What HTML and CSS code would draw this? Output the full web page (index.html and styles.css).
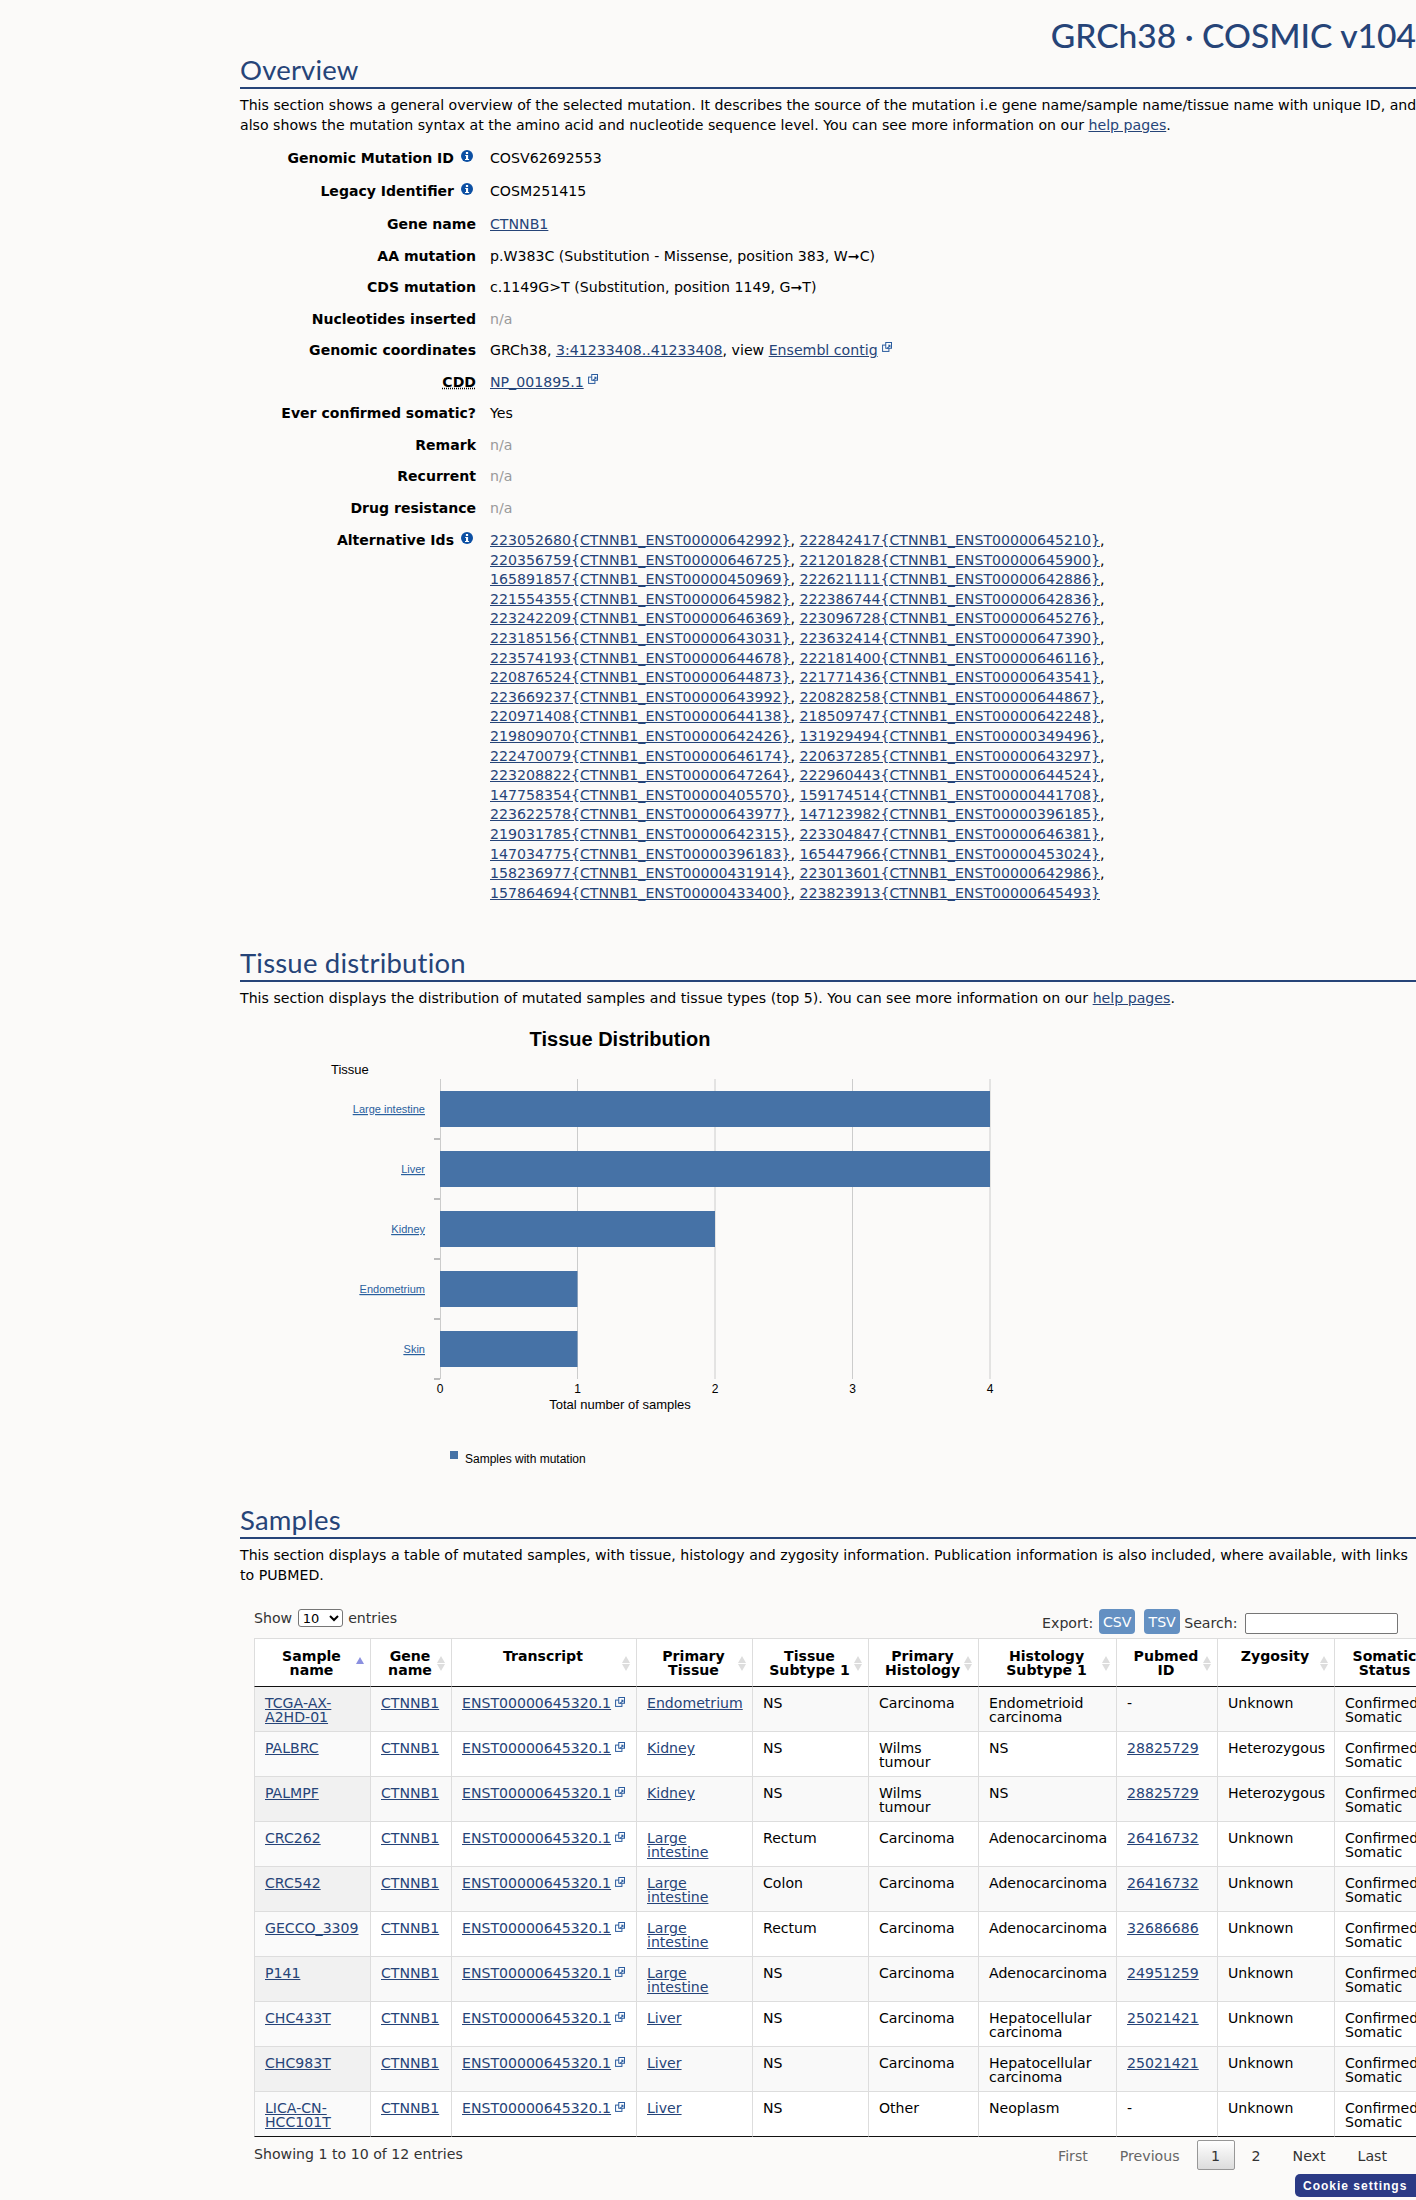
FILE: index.html
```html
<!DOCTYPE html>
<html lang="en">
<head>
<meta charset="utf-8">
<title>COSMIC mutation overview</title>
<link rel="stylesheet" href="styles.css">
</head>
<body>
<svg class="defs" width="0" height="0" aria-hidden="true">
  <symbol id="info" viewBox="0 0 12 12"><circle cx="6" cy="6" r="6" fill="#0c4fa3"/><rect x="4.9" y="2" width="2.2" height="2" fill="#fff"/><path d="M4.2 5h2.9v3.9h1v1.2H4v-1.2h1V6.1h-.8z" fill="#fff"/></symbol>
  <symbol id="ext" viewBox="0 0 12 12"><rect x=".7" y="3.7" width="7.6" height="7.6" fill="none" stroke="#2b5c9e" stroke-width="1.2"/><rect x="4.5" y=".6" width="6.9" height="6.9" fill="#fff" stroke="#2b5c9e" stroke-width="1.2"/><path d="M5.4 7.6 8.2 4.7 7 3.4h3.2v3.3L9 5.6 6.4 8.4z" fill="#2b5c9e"/></symbol>
</svg>
<main class="page">
  <h1 class="title">GRCh38 · COSMIC v104</h1>

  <section class="overview">
    <h2 class="heading">Overview</h2>
    <p class="intro">This section shows a general overview of the selected mutation. It describes the source of the mutation i.e gene name/sample name/tissue name with unique ID, and also shows the mutation syntax at the amino acid and nucleotide sequence level. You can see more information on our <a href="#">help pages</a>.</p>
    <dl class="facts">
      <div class="fact has-info"><dt>Genomic Mutation ID<svg class="info"><use href="#info"/></svg></dt><dd>COSV62692553</dd></div>
      <div class="fact has-info"><dt>Legacy Identifier<svg class="info"><use href="#info"/></svg></dt><dd>COSM251415</dd></div>
      <div class="fact"><dt>Gene name</dt><dd><a href="#">CTNNB1</a></dd></div>
      <div class="fact"><dt>AA mutation</dt><dd>p.W383C (Substitution - Missense, position 383, W➞C)</dd></div>
      <div class="fact"><dt>CDS mutation</dt><dd>c.1149G&gt;T (Substitution, position 1149, G➞T)</dd></div>
      <div class="fact"><dt>Nucleotides inserted</dt><dd class="na">n/a</dd></div>
      <div class="fact"><dt>Genomic coordinates</dt><dd>GRCh38, <a href="#">3:41233408..41233408</a>, view <a href="#">Ensembl contig</a><svg class="ext"><use href="#ext"/></svg></dd></div>
      <div class="fact"><dt><abbr class="abbr">CDD</abbr></dt><dd><a href="#">NP_001895.1</a><svg class="ext"><use href="#ext"/></svg></dd></div>
      <div class="fact"><dt>Ever confirmed somatic?</dt><dd>Yes</dd></div>
      <div class="fact"><dt>Remark</dt><dd class="na">n/a</dd></div>
      <div class="fact"><dt>Recurrent</dt><dd class="na">n/a</dd></div>
      <div class="fact"><dt>Drug resistance</dt><dd class="na">n/a</dd></div>
      <div class="fact fact-alt"><dt>Alternative Ids<svg class="info"><use href="#info"/></svg></dt><dd class="alts">
        <a href="#">223052680{CTNNB1_ENST00000642992}</a>, <a href="#">222842417{CTNNB1_ENST00000645210}</a>,
        <a href="#">220356759{CTNNB1_ENST00000646725}</a>, <a href="#">221201828{CTNNB1_ENST00000645900}</a>,
        <a href="#">165891857{CTNNB1_ENST00000450969}</a>, <a href="#">222621111{CTNNB1_ENST00000642886}</a>,
        <a href="#">221554355{CTNNB1_ENST00000645982}</a>, <a href="#">222386744{CTNNB1_ENST00000642836}</a>,
        <a href="#">223242209{CTNNB1_ENST00000646369}</a>, <a href="#">223096728{CTNNB1_ENST00000645276}</a>,
        <a href="#">223185156{CTNNB1_ENST00000643031}</a>, <a href="#">223632414{CTNNB1_ENST00000647390}</a>,
        <a href="#">223574193{CTNNB1_ENST00000644678}</a>, <a href="#">222181400{CTNNB1_ENST00000646116}</a>,
        <a href="#">220876524{CTNNB1_ENST00000644873}</a>, <a href="#">221771436{CTNNB1_ENST00000643541}</a>,
        <a href="#">223669237{CTNNB1_ENST00000643992}</a>, <a href="#">220828258{CTNNB1_ENST00000644867}</a>,
        <a href="#">220971408{CTNNB1_ENST00000644138}</a>, <a href="#">218509747{CTNNB1_ENST00000642248}</a>,
        <a href="#">219809070{CTNNB1_ENST00000642426}</a>, <a href="#">131929494{CTNNB1_ENST00000349496}</a>,
        <a href="#">222470079{CTNNB1_ENST00000646174}</a>, <a href="#">220637285{CTNNB1_ENST00000643297}</a>,
        <a href="#">223208822{CTNNB1_ENST00000647264}</a>, <a href="#">222960443{CTNNB1_ENST00000644524}</a>,
        <a href="#">147758354{CTNNB1_ENST00000405570}</a>, <a href="#">159174514{CTNNB1_ENST00000441708}</a>,
        <a href="#">223622578{CTNNB1_ENST00000643977}</a>, <a href="#">147123982{CTNNB1_ENST00000396185}</a>,
        <a href="#">219031785{CTNNB1_ENST00000642315}</a>, <a href="#">223304847{CTNNB1_ENST00000646381}</a>,
        <a href="#">147034775{CTNNB1_ENST00000396183}</a>, <a href="#">165447966{CTNNB1_ENST00000453024}</a>,
        <a href="#">158236977{CTNNB1_ENST00000431914}</a>, <a href="#">223013601{CTNNB1_ENST00000642986}</a>,
        <a href="#">157864694{CTNNB1_ENST00000433400}</a>, <a href="#">223823913{CTNNB1_ENST00000645493}</a>
      </dd></div>
    </dl>
  </section>

  <section class="tissue">
    <h2 class="heading">Tissue distribution</h2>
    <p class="intro">This section displays the distribution of mutated samples and tissue types (top 5). You can see more information on our <a href="#">help pages</a>.</p>
    <svg class="chart" width="800" height="480" viewBox="0 0 800 480">
      <g class="grid">
        <line x1="140.5" y1="70" x2="140.5" y2="370"/>
        <line x1="277.5" y1="70" x2="277.5" y2="370"/>
        <line x1="415" y1="70" x2="415" y2="370"/>
        <line x1="552.5" y1="70" x2="552.5" y2="370"/>
        <line x1="690" y1="70" x2="690" y2="370"/>
      </g>
      <g class="ticks">
        <line x1="134" y1="130" x2="140" y2="130"/>
        <line x1="134" y1="190" x2="140" y2="190"/>
        <line x1="134" y1="250" x2="140" y2="250"/>
        <line x1="134" y1="310" x2="140" y2="310"/>
        <line x1="134" y1="370" x2="140" y2="370"/>
      </g>
      <g class="bars">
        <rect x="140" y="82" width="550" height="36"/>
        <rect x="140" y="142" width="550" height="36"/>
        <rect x="140" y="202" width="275" height="36"/>
        <rect x="140" y="262" width="137.5" height="36"/>
        <rect x="140" y="322" width="137.5" height="36"/>
      </g>
      <text class="c-title" x="320" y="37" text-anchor="middle">Tissue Distribution</text>
      <text class="c-axis" x="31" y="65">Tissue</text>
      <g class="c-links">
        <a href="#"><text x="125" y="104" text-anchor="end">Large intestine</text></a>
        <a href="#"><text x="125" y="164" text-anchor="end">Liver</text></a>
        <a href="#"><text x="125" y="224" text-anchor="end">Kidney</text></a>
        <a href="#"><text x="125" y="284" text-anchor="end">Endometrium</text></a>
        <a href="#"><text x="125" y="344" text-anchor="end">Skin</text></a>
      </g>
      <g class="c-nums">
        <text x="140" y="384" text-anchor="middle">0</text>
        <text x="277.5" y="384" text-anchor="middle">1</text>
        <text x="415" y="384" text-anchor="middle">2</text>
        <text x="552.5" y="384" text-anchor="middle">3</text>
        <text x="690" y="384" text-anchor="middle">4</text>
      </g>
      <text class="c-axis" x="320" y="400" text-anchor="middle">Total number of samples</text>
      <rect class="c-key" x="150" y="442" width="8" height="8"/>
      <text class="c-legend" x="165" y="454">Samples with mutation</text>
    </svg>
  </section>

  <section class="samples">
    <h2 class="heading">Samples</h2>
    <p class="intro">This section displays a table of mutated samples, with tissue, histology and zygosity information. Publication information is also included, where available, with links to PUBMED.</p>
    <div class="dt">
      <div class="dt-top">
        <label class="dt-length">Show <select class="dt-select"><option>10</option></select> entries</label>
        <div class="dt-tools">
          <span>Export:</span>
          <button class="dt-btn">CSV</button>
          <button class="dt-btn">TSV</button>
          <label class="dt-search">Search: <input class="dt-input" type="text"></label>
        </div>
      </div>
      <table class="table">
        <colgroup>
          <col class="c1"><col class="c2"><col class="c3"><col class="c4"><col class="c5"><col class="c6"><col class="c7"><col class="c8"><col class="c9"><col class="c10">
        </colgroup>
        <thead>
          <tr>
            <th class="sorted">Sample name</th><th>Gene name</th><th>Transcript</th><th>Primary Tissue</th><th>Tissue Subtype 1</th><th>Primary Histology</th><th>Histology Subtype 1</th><th>Pubmed ID</th><th>Zygosity</th><th>Somatic Status</th>
          </tr>
        </thead>
        <tbody>
          <tr><td><a href="#">TCGA-AX-A2HD-01</a></td><td><a href="#">CTNNB1</a></td><td><a href="#">ENST00000645320.1</a><svg class="ext"><use href="#ext"/></svg></td><td><a href="#">Endometrium</a></td><td>NS</td><td>Carcinoma</td><td>Endometrioid carcinoma</td><td>-</td><td>Unknown</td><td>Confirmed Somatic</td></tr>
          <tr><td><a href="#">PALBRC</a></td><td><a href="#">CTNNB1</a></td><td><a href="#">ENST00000645320.1</a><svg class="ext"><use href="#ext"/></svg></td><td><a href="#">Kidney</a></td><td>NS</td><td>Wilms tumour</td><td>NS</td><td><a href="#">28825729</a></td><td>Heterozygous</td><td>Confirmed Somatic</td></tr>
          <tr><td><a href="#">PALMPF</a></td><td><a href="#">CTNNB1</a></td><td><a href="#">ENST00000645320.1</a><svg class="ext"><use href="#ext"/></svg></td><td><a href="#">Kidney</a></td><td>NS</td><td>Wilms tumour</td><td>NS</td><td><a href="#">28825729</a></td><td>Heterozygous</td><td>Confirmed Somatic</td></tr>
          <tr><td><a href="#">CRC262</a></td><td><a href="#">CTNNB1</a></td><td><a href="#">ENST00000645320.1</a><svg class="ext"><use href="#ext"/></svg></td><td><a href="#">Large intestine</a></td><td>Rectum</td><td>Carcinoma</td><td>Adenocarcinoma</td><td><a href="#">26416732</a></td><td>Unknown</td><td>Confirmed Somatic</td></tr>
          <tr><td><a href="#">CRC542</a></td><td><a href="#">CTNNB1</a></td><td><a href="#">ENST00000645320.1</a><svg class="ext"><use href="#ext"/></svg></td><td><a href="#">Large intestine</a></td><td>Colon</td><td>Carcinoma</td><td>Adenocarcinoma</td><td><a href="#">26416732</a></td><td>Unknown</td><td>Confirmed Somatic</td></tr>
          <tr><td><a href="#">GECCO_3309</a></td><td><a href="#">CTNNB1</a></td><td><a href="#">ENST00000645320.1</a><svg class="ext"><use href="#ext"/></svg></td><td><a href="#">Large intestine</a></td><td>Rectum</td><td>Carcinoma</td><td>Adenocarcinoma</td><td><a href="#">32686686</a></td><td>Unknown</td><td>Confirmed Somatic</td></tr>
          <tr><td><a href="#">P141</a></td><td><a href="#">CTNNB1</a></td><td><a href="#">ENST00000645320.1</a><svg class="ext"><use href="#ext"/></svg></td><td><a href="#">Large intestine</a></td><td>NS</td><td>Carcinoma</td><td>Adenocarcinoma</td><td><a href="#">24951259</a></td><td>Unknown</td><td>Confirmed Somatic</td></tr>
          <tr><td><a href="#">CHC433T</a></td><td><a href="#">CTNNB1</a></td><td><a href="#">ENST00000645320.1</a><svg class="ext"><use href="#ext"/></svg></td><td><a href="#">Liver</a></td><td>NS</td><td>Carcinoma</td><td>Hepatocellular carcinoma</td><td><a href="#">25021421</a></td><td>Unknown</td><td>Confirmed Somatic</td></tr>
          <tr><td><a href="#">CHC983T</a></td><td><a href="#">CTNNB1</a></td><td><a href="#">ENST00000645320.1</a><svg class="ext"><use href="#ext"/></svg></td><td><a href="#">Liver</a></td><td>NS</td><td>Carcinoma</td><td>Hepatocellular carcinoma</td><td><a href="#">25021421</a></td><td>Unknown</td><td>Confirmed Somatic</td></tr>
          <tr><td><a href="#">LICA-CN-HCC101T</a></td><td><a href="#">CTNNB1</a></td><td><a href="#">ENST00000645320.1</a><svg class="ext"><use href="#ext"/></svg></td><td><a href="#">Liver</a></td><td>NS</td><td>Other</td><td>Neoplasm</td><td>-</td><td>Unknown</td><td>Confirmed Somatic</td></tr>
        </tbody>
      </table>
      <div class="dt-bottom">
        <div class="dt-info">Showing 1 to 10 of 12 entries</div>
        <nav class="pager">
          <span class="pg off">First</span>
          <span class="pg off">Previous</span>
          <span class="pg current">1</span>
          <span class="pg">2</span>
          <span class="pg">Next</span>
          <span class="pg">Last</span>
        </nav>
      </div>
    </div>
  </section>
</main>
<button class="cookie">Cookie settings</button>
</body>
</html>
```
FILE: styles.css
```css
* { box-sizing: border-box; }
html, body { margin: 0; padding: 0; overflow-x: hidden; }
body {
  background: #fbfaf9;
  color: #000;
  font-family: "DejaVu Sans", Verdana, sans-serif;
  font-size: 14.15px;
  line-height: 19.5px;
}
.defs { position: absolute; }
a { color: #264478; text-decoration: underline; }
.page { padding: 10px 0 0 240px; width: 1416px; }

.title {
  margin: 0;
  height: 47px;
  text-align: right;
  font-family: Lato, sans-serif;
  font-weight: 500;
  font-size: 33.6px;
  line-height: 50px;
  color: #264478;
}
.heading {
  margin: 0;
  height: 32px;
  border-bottom: 2px solid #264478;
  font-family: Lato, sans-serif;
  font-weight: 400;
  font-size: 27.5px;
  line-height: 25px;
  letter-spacing: .2px;
  color: #264478;
}
.intro { margin: 6px 0 0; width: 1180px; line-height: 20px; }

.facts { margin: 8px 0 0; }
.fact { display: flex; gap: 14px; padding: 6px 0; }
.fact.has-info { padding-bottom: 7.5px; }
.fact-alt { padding-top: 7px; }
.fact dt { width: 236px; flex: none; text-align: right; font-weight: 700; font-size: 14.05px; }
.fact dd { margin: 0; }
.na { color: #999; }
.abbr { text-decoration: underline dotted; }
.alts { width: 640px; line-height: 19.6px; }
.info { width: 12px; height: 12px; margin: 1px 3px 0 7px; vertical-align: top; }
.ext { width: 10px; height: 10px; margin: 1px 0 0 4px; vertical-align: top; }

.tissue { margin-top: 41px; }
.chart { display: block; margin: 1px 0 0 60px; }

.samples { margin-top: 18px; }
.dt { margin: 24px 0 0 14px; color: #333; }
.dt-top { display: flex; justify-content: space-between; align-items: flex-end; width: 1144px; height: 29px; }
.dt-length { align-self: flex-start; line-height: 18px; }
.dt-select { width: 45px; height: 18px; font: 13px "DejaVu Sans", sans-serif; margin: 0 1px; padding: 0; background: #fff; border: 1px solid #767676; border-radius: 3px; vertical-align: top; }
.dt-tools { display: flex; align-items: flex-end; padding-bottom: 4px; line-height: 21px; }
.dt-btn {
  width: 36px; height: 25px; padding: 0; margin-left: 9px; border: 0; border-radius: 4px;
  background: #6490c2; color: #fff; font: 14.15px "DejaVu Sans", sans-serif;
}
.dt-btn:first-of-type { margin-left: 6px; }
.dt-search { margin-left: 4px; }
.dt-input { width: 153px; height: 21px; margin-left: 3px; border: 1px solid #767676; border-radius: 2px; background: #fff; padding: 0; vertical-align: bottom; }

.table { table-layout: fixed; border-collapse: separate; border-spacing: 0; width: 1182px; color: #000; background: #fff; line-height: 14px; font-size: 14.1px; }
.c1 { width: 116px; } .c2 { width: 81px; } .c3 { width: 185px; } .c4 { width: 116px; } .c5 { width: 116px; }
.c6 { width: 110px; } .c7 { width: 138px; } .c8 { width: 101px; } .c9 { width: 117px; } .c10 { width: 102px; }
.table th {
  position: relative;
  padding: 10px 12px 9px 10px;
  background: #fff;
  border-top: 1px solid #ddd;
  border-left: 1px solid #ddd;
  border-bottom: 1px solid #111;
  font-weight: 700;
  text-align: center;
  vertical-align: top;
  height: 49px;
}
.table th::before, .table th::after {
  content: "";
  position: absolute;
  right: 6px;
  border-left: 4px solid transparent;
  border-right: 4px solid transparent;
}
.table th::before { top: calc(50% - 7px); border-bottom: 7px solid #ddd; }
.table th::after { top: calc(50% + 1px); border-top: 7px solid #ddd; }
.table th.sorted::before { border-bottom-color: #8b90e0; top: calc(50% - 6px); }
.table th.sorted::after { display: none; }
.table td {
  padding: 9px 10px 7px;
  height: 45px;
  border-left: 1px solid #ddd;
  border-bottom: 1px solid #ddd;
  vertical-align: top;
  background: #fff;
}
.table tbody tr:nth-child(odd) td { background: #f9f9f9; }
.table tbody tr:nth-child(odd) td:first-child { background: #f1f1f1; }
.table tbody tr:nth-child(even) td:first-child { background: #fafafa; }
.table tbody tr:last-child td { border-bottom: 1px solid #111; }

.dt-bottom { display: flex; justify-content: space-between; width: 1148px; }
.dt-info { padding-top: 8px; }
.pager { display: flex; margin-top: 3px; }
.pg { padding: 5px 14px; border: 1px solid transparent; margin-left: 2px; line-height: 20px; height: 30px; color: #333; }
.pg.off { color: #666; }
.pg.current { background: linear-gradient(#fff, #dcdcdc); border: 1px solid #979797; border-radius: 2px; padding: 5px 13.5px; }

.chart .grid line { stroke: #ccc; stroke-width: 1; }
.chart .ticks line { stroke: #bbb; stroke-width: 2; }
.chart .bars rect, .c-key { fill: #4672a6; }
.chart text { font-family: "Liberation Sans", Arial, sans-serif; fill: #000; }
.c-title { font-size: 20px; font-weight: 700; }
.c-axis { font-size: 13px; }
.c-links text { font-size: 11px; fill: #2a5f9e; text-decoration: underline; }
.c-nums text { font-size: 12px; }
.c-legend { font-size: 12px; }

.cookie {
  position: fixed;
  right: -3px;
  bottom: 3px;
  width: 124px;
  height: 23px;
  border: 0;
  padding: 0 0 0 8px;
  text-align: left;
  border-radius: 5px 0 0 5px;
  background: #2b3a85;
  color: #fff;
  font: 700 12px "Liberation Sans", Arial, sans-serif;
  letter-spacing: 1px;
}
```
